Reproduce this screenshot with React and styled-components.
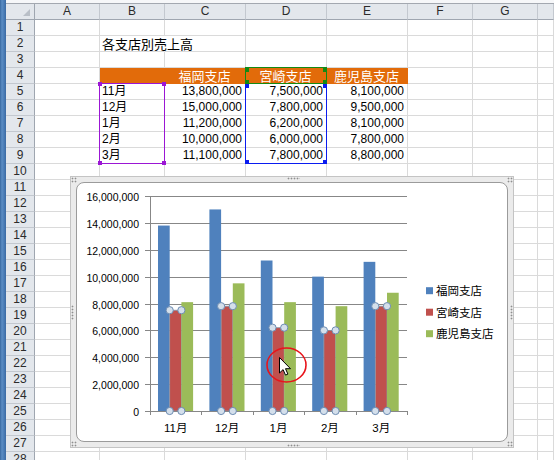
import React from 'react';
import styled, { createGlobalStyle, css } from 'styled-components';

const Global = createGlobalStyle`
  html, body { margin: 0; padding: 0; background: #fff; overflow: hidden; }
  body { font-family: "Liberation Sans", "Noto Sans CJK JP", sans-serif; }
`;

const Page = styled.div`
  position: relative;
  width: 554px;
  height: 460px;
  overflow: hidden;
  display: flex;
  background: #fff;
`;

const WindowEdge = styled.div`
  width: 6px;
  flex: none;
  background: linear-gradient(90deg, #3768a0 0, #5b8dc4 2px, #4a7cb6 4px, #3a6aa3 6px);
`;

const Sheet = styled.div`
  flex: 1;
  min-width: 0;
  display: flex;
  flex-direction: column;
`;

const TopEdge = styled.div`
  height: 3px;
  flex: none;
  background: #f6f7f9;
  border-bottom: 1px solid #a3a8b0;
`;

const Grid = styled.div`
  display: grid;
  grid-template-columns: 29px 65px 65px 81px 81px 81px 65px 65px 1fr;
  grid-auto-rows: 16px;
`;

const headBase = css`
  box-sizing: border-box;
  background: #e3e7ec;
  color: #2b2b2b;
  font-size: 12px;
  line-height: 15px;
  text-align: center;
  white-space: nowrap;
  overflow: hidden;
`;

const ColHead = styled.div`
  ${headBase};
  border-right: 1px solid #c3c8cf;
  border-bottom: 1px solid #9fa6b0;
`;

const Corner = styled.div`
  ${headBase};
  position: relative;
  border-right: 1px solid #9fa6b0;
  border-bottom: 1px solid #9fa6b0;
  &::after {
    content: '';
    position: absolute;
    right: 4px;
    bottom: 3px;
    width: 7px;
    height: 7px;
    background: #b9bfc7;
    clip-path: polygon(100% 0, 100% 100%, 0 100%);
  }
`;

const RowHead = styled.div`
  ${headBase};
  border-right: 1px solid #9fa6b0;
  border-bottom: 1px solid #c3c8cf;
`;

const Cell = styled.div`
  box-sizing: border-box;
  border-right: 1px solid ${p => (p.$overflow ? 'transparent' : p.$fill || '#dadada')};
  border-bottom: 1px solid ${p => p.$fill || '#dadada'};
  background: ${p => p.$fill || 'transparent'};
  color: ${p => p.$color || '#000'};
  font-size: ${p => (p.$cjk ? '13px' : '12px')};
  font-family: ${p => (p.$cjk ? '"Noto Sans CJK JP", sans-serif' : '"Liberation Sans", "Noto Sans CJK JP", sans-serif')};
  line-height: 15px;
  text-align: ${p => p.$align || 'left'};
  padding: 0 3px 0 2px;
  white-space: nowrap;
  min-width: 0;
`;

/* ---------- selection overlays on the sheet ---------- */
const SelBox = styled.div`
  position: absolute;
  box-sizing: border-box;
  border: 1px solid ${p => p.$c};
  pointer-events: none;
`;

const cornerPos = {
  tl: css`left: -2px; top: -2px;`,
  tr: css`right: -2px; top: -2px;`,
  bl: css`left: -2px; bottom: -2px;`,
  br: css`right: -2px; bottom: -2px;`,
  tli: css`left: -1px; top: 0;`,
  tri: css`right: -1px; top: 0;`,
  bli: css`left: -1px; bottom: -1px;`,
  bri: css`right: -1px; bottom: -1px;`,
  tlb: css`left: -1px; top: 0;`,
  trb: css`right: -1px; top: 0;`,
};

const Handle = styled.span`
  position: absolute;
  width: 4px;
  height: 4px;
  background: ${p => p.$c};
  ${p => cornerPos[p.$at]};
`;

function Selection({ color, rect, corners }) {
  return (
    <SelBox $c={color} style={rect}>
      {corners.map(at => (
        <Handle key={at} $c={color} $at={at} />
      ))}
    </SelBox>
  );
}

/* ---------- chart object ---------- */
const ChartObject = styled.div`
  position: absolute;
  left: 70px;
  top: 176px;
  width: 444px;
  height: 272px;
  box-sizing: border-box;
  border: 1px solid #c4c4c4;
  background: #ebebeb;
  padding: 5px;
`;

const ChartInner = styled.div`
  height: 100%;
  box-sizing: border-box;
  border: 1px solid #9b9b9b;
  border-radius: 8px;
  background: #fff;
  overflow: hidden;
`;

const ChartSvg = styled.svg`
  display: block;
  width: 100%;
  height: 100%;
`;

const gripPos = {
  top: css`left: 50%; top: 0; width: 13px; height: 3px; margin-left: -5px;`,
  bottom: css`left: 50%; bottom: 0; width: 13px; height: 3px; margin-left: -5px;`,
  left: css`left: 0; top: 50%; width: 3px; height: 15px; margin-top: -7px;`,
  right: css`right: 0; top: 50%; width: 3px; height: 15px; margin-top: -7px;`,
  tl: css`left: 0; top: 0; width: 6px; height: 6px;`,
  tr: css`right: 0; top: 0; width: 6px; height: 6px;`,
  bl: css`left: 0; bottom: 0; width: 6px; height: 6px;`,
  br: css`right: 0; bottom: 0; width: 6px; height: 6px;`,
};

const Grip = styled.span`
  position: absolute;
  background-image: radial-gradient(circle, #8f8f8f 0.8px, transparent 1.1px);
  background-size: 3px 3px;
  ${p => gripPos[p.$at]};
`;

const MONTHS = ['11月', '12月', '1月', '2月', '3月'];
const SERIES = [
  { name: '福岡支店', color: '#4f81bd', values: [13800000, 15000000, 11200000, 10000000, 11100000] },
  { name: '宮崎支店', color: '#c0504d', values: [7500000, 7800000, 6200000, 6000000, 7800000] },
  { name: '鹿児島支店', color: '#9bbb59', values: [8100000, 9500000, 8100000, 7800000, 8800000] },
];

const fmt = n => n.toLocaleString('en-US');
const ORANGE = '#e26b0a';
const COLS = ['A', 'B', 'C', 'D', 'E', 'F', 'G', ''];

function cellFor(row, col) {
  if (row === 2 && col === 'B') return { t: '各支店別売上高', cjk: true, overflow: true };
  if (row === 4 && ['B', 'C', 'D', 'E'].includes(col)) {
    const idx = { C: 0, D: 1, E: 2 }[col];
    return { t: idx === undefined ? '' : SERIES[idx].name, cjk: true, fill: ORANGE, color: '#fff', align: 'center' };
  }
  if (row >= 5 && row <= 9) {
    const m = row - 5;
    if (col === 'B') return { t: MONTHS[m] };
    const idx = { C: 0, D: 1, E: 2 }[col];
    if (idx !== undefined) return { t: fmt(SERIES[idx].values[m]), align: 'right' };
  }
  return { t: '' };
}

/* chart geometry (page coordinates) */
const PX0 = 150;
const PX1 = 407;
const PY0 = 411;
const PYT = 196;
const CAT = (PX1 - PX0) / 5;
const BW = 11.7;
const yOf = v => PY0 - (v / 16000000) * (PY0 - PYT);

function ChartDrawing() {
  const grid = [];
  for (let k = 0; k <= 8; k++) {
    const y = Math.round(yOf(k * 2000000)) + 0.5;
    grid.push(
      <g key={k}>
        {k > 0 && <line x1={PX0} x2={PX1} y1={y} y2={y} stroke="#878787" strokeWidth="1" />}
        <line x1={145} x2={PX0} y1={y} y2={y} stroke="#878787" strokeWidth="1" />
        <text x={139} y={y + 4} fontSize="10.5" textAnchor="end" fill="#000" fontFamily="Liberation Sans, sans-serif">
          {fmt(k * 2000000)}
        </text>
      </g>
    );
  }
  const bars = [];
  const handles = [];
  MONTHS.forEach((m, i) => {
    const x0 = PX0 + i * CAT + 8;
    SERIES.forEach((s, si) => {
      const x = x0 + si * BW;
      const y = yOf(s.values[i]);
      bars.push(
        <rect key={`${i}-${si}`} x={x} y={y} width={BW} height={PY0 - y} fill={s.color}
          stroke={si === 1 ? '#8b95a6' : 'none'} strokeWidth={si === 1 ? 0.8 : 0} />
      );
      if (si === 1) {
        [[x, y], [x + BW, y], [x, PY0], [x + BW, PY0]].forEach(([hx, hy], hi) =>
          handles.push(
            <circle key={`${i}-h${hi}`} cx={hx} cy={hy} r="3.6" fill="#d4dfeb" stroke="#6e8db3" strokeWidth="1" />
          )
        );
      }
    });
  });
  return (
    <ChartSvg viewBox="77 183 430 258">
      {grid}
      {bars}
      <line x1={PX0 + 0.5} x2={PX0 + 0.5} y1={PYT} y2={PY0} stroke="#878787" />
      <line x1={PX0} x2={PX1} y1={PY0 + 0.5} y2={PY0 + 0.5} stroke="#878787" />
      {[0, 1, 2, 3, 4, 5].map(i => {
        const x = Math.round(PX0 + i * CAT) + 0.5;
        return <line key={i} x1={x} x2={x} y1={PY0} y2={PY0 + 4} stroke="#878787" />;
      })}
      {MONTHS.map((m, i) => (
        <text key={m} x={PX0 + (i + 0.5) * CAT} y={431.5} fontSize="11.5" textAnchor="middle" fill="#000"
          fontFamily="Liberation Sans, Noto Sans CJK JP, sans-serif">
          {m}
        </text>
      ))}
      {handles}
      {SERIES.map((s, i) => {
        const cy = 290.7 + i * 21.5;
        return (
          <g key={s.name}>
            <rect x={426} y={cy - 3.5} width={7} height={7} fill={s.color} />
            <text x={436} y={cy + 4.3} fontSize="11.5" fill="#000" fontFamily="Noto Sans CJK JP, sans-serif">
              {s.name}
            </text>
          </g>
        );
      })}
      <ellipse cx={286.5} cy={365} rx={19.5} ry={17} fill="none" stroke="#e8141b" strokeWidth="1.6" />
      <polygon
        transform="translate(279.5 357.5)"
        points="0,0 0,15.5 3.6,12.1 6,17.6 8.4,16.6 6,11.2 11,11.2"
        fill="#fff"
        stroke="#000"
        strokeWidth="1"
        strokeLinejoin="round"
      />
    </ChartSvg>
  );
}

const GRIPS = ['top', 'bottom', 'left', 'right', 'tl', 'tr', 'bl', 'br'];

export default function App() {
  const rows = Array.from({ length: 28 }, (_, i) => i + 1);
  return (
    <>
      <Global />
      <Page>
        <WindowEdge />
        <Sheet>
          <TopEdge />
          <Grid>
            <Corner />
            {COLS.map((c, i) => (
              <ColHead key={`h${i}`}>{c}</ColHead>
            ))}
            {rows.map(r => (
              <React.Fragment key={r}>
                <RowHead>{r}</RowHead>
                {COLS.map((c, ci) => {
                  const d = cellFor(r, c);
                  return (
                    <Cell key={ci} $cjk={d.cjk} $fill={d.fill} $color={d.color} $align={d.align} $overflow={d.overflow}>
                      {d.t}
                    </Cell>
                  );
                })}
              </React.Fragment>
            ))}
          </Grid>
        </Sheet>

        <Selection color="#9b16d4" rect={{ left: 99, top: 83, width: 66, height: 81 }} corners={['tl', 'tr', 'bl', 'br']} />
        <Selection color="#0a1cf0" rect={{ left: 245, top: 83, width: 82, height: 81 }} corners={['tlb', 'trb', 'bli', 'bri']} />
        <Selection color="#138a13" rect={{ left: 245, top: 67, width: 82, height: 17 }} corners={['tli', 'tri', 'bli', 'bri']} />

        <ChartObject>
          {GRIPS.map(g => (
            <Grip key={g} $at={g} />
          ))}
          <ChartInner>
            <ChartDrawing />
          </ChartInner>
        </ChartObject>
      </Page>
    </>
  );
}
